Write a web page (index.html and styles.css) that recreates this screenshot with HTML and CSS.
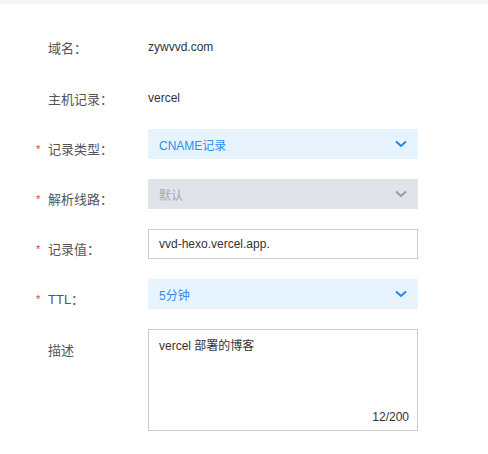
FILE: index.html
```html
<!DOCTYPE html>
<html lang="zh">
<head>
<meta charset="utf-8">
<link rel="stylesheet" href="styles.css">
</head>
<body>
<div class="topbar"></div>
<form class="form">
  <div class="row first">
    <div class="label"><span class="req"></span>域名：</div>
    <div class="control text">zywvvd.com</div>
  </div>
  <div class="row second">
    <div class="label"><span class="req"></span>主机记录：</div>
    <div class="control text">vercel</div>
  </div>
  <div class="row third">
    <div class="label low"><span class="req">*</span>记录类型：</div>
    <div class="control select">
      <span>CNAME记录</span>
      <svg class="chev" width="12" height="8" viewBox="0 0 12 8"><path d="M1 1.5 L6 6 L11 1.5" fill="none" stroke="currentColor" stroke-width="2"/></svg>
    </div>
  </div>
  <div class="row">
    <div class="label low"><span class="req">*</span>解析线路：</div>
    <div class="control select disabled">
      <span>默认</span>
      <svg class="chev" width="12" height="8" viewBox="0 0 12 8"><path d="M1 1.5 L6 6 L11 1.5" fill="none" stroke="currentColor" stroke-width="2"/></svg>
    </div>
  </div>
  <div class="row">
    <div class="label low"><span class="req">*</span>记录值：</div>
    <div class="control input">vvd-hexo.vercel.app.</div>
  </div>
  <div class="row">
    <div class="label low"><span class="req">*</span>TTL：</div>
    <div class="control select">
      <span>5分钟</span>
      <svg class="chev" width="12" height="8" viewBox="0 0 12 8"><path d="M1 1.5 L6 6 L11 1.5" fill="none" stroke="currentColor" stroke-width="2"/></svg>
    </div>
  </div>
  <div class="row top">
    <div class="label desc"><span class="req"></span>描述</div>
    <div class="control textarea">
      <div class="ta-text">vercel 部署的博客</div>
      <div class="count">12/200</div>
    </div>
  </div>
</form>
</body>
</html>
```
FILE: styles.css
```css
html, body {
  margin: 0;
  padding: 0;
  background: #fff;
  font-family: "Liberation Sans", "Noto Sans CJK SC", sans-serif;
}
.topbar {
  height: 4px;
  background: #f4f5f9;
}
.form {
  display: flex;
  flex-direction: column;
  gap: 20px;
  padding: 28px 0 0 36px;
}
.row {
  display: flex;
  align-items: center;
  height: 30px;
}
.row.second {
  margin-top: 1px;
}
.row.third {
  margin-top: -4px;
}
.row.top {
  align-items: flex-start;
  height: auto;
}
.label {
  width: 112px;
  display: flex;
  align-items: center;
  font-size: 13px;
  color: #555;
}
.label.low {
  padding-top: 9px;
}
.label.desc {
  padding-top: 11px;
}
.req {
  width: 12px;
  color: #e4393c;
  font-size: 11px;
  flex: none;
}
.control {
  width: 270px;
  box-sizing: border-box;
  font-size: 12px;
  color: #333;
}
.select {
  height: 30px;
  background: #e8f4fd;
  color: #2b8ef0;
  display: flex;
  align-items: center;
  justify-content: space-between;
  padding: 0 11px 0 11px;
  font-size: 12px;
}
.select .chev {
  color: #2188f0;
}
.select.disabled {
  background: #e1e3ea;
  color: #a8a8a8;
}
.select.disabled .chev {
  color: #9a9a9a;
}
.input {
  height: 30px;
  border: 1px solid #ccc;
  display: flex;
  align-items: center;
  padding-left: 10px;
  font-size: 12px;
}
.textarea {
  height: 102px;
  border: 1px solid #ccc;
  display: flex;
  flex-direction: column;
  justify-content: space-between;
  padding: 6px 8px 6px 10px;
}
.count {
  align-self: flex-end;
}
```
